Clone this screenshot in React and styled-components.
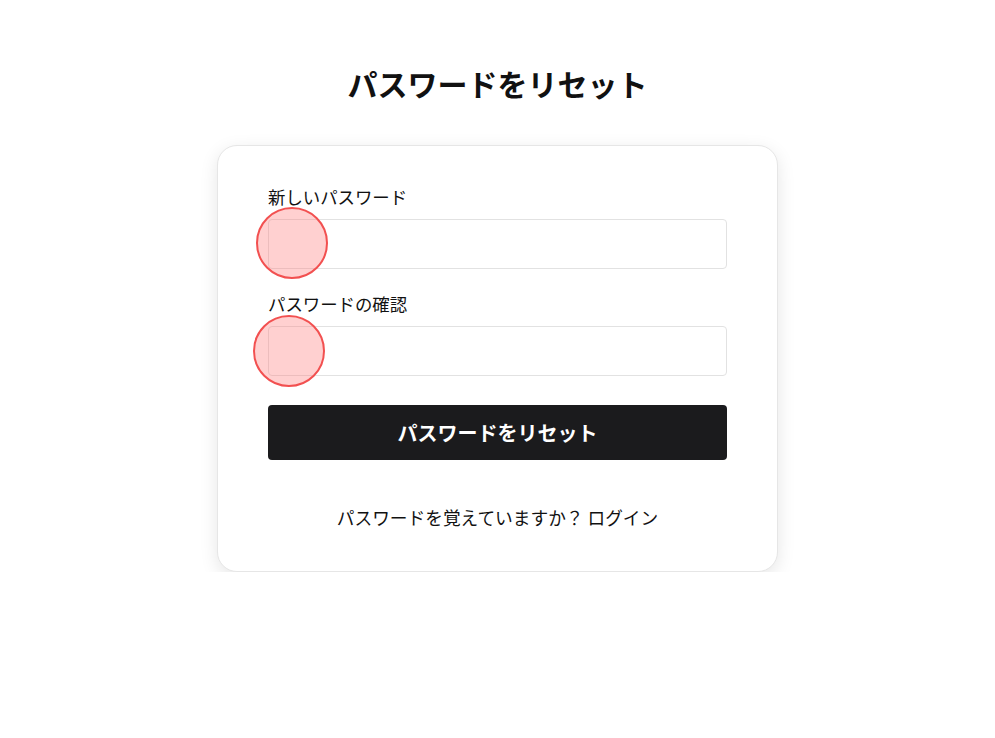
import styled, { createGlobalStyle } from 'styled-components';

const GlobalStyle = createGlobalStyle`
  html, body {
    margin: 0;
    padding: 0;
    background: #ffffff;
    font-family: 'Noto Sans CJK JP', 'Noto Sans', sans-serif;
    color: #111;
  }
`;

const Page = styled.div`
  display: flex;
  flex-direction: column;
  align-items: center;
  padding-top: 60px;
`;

const Title = styled.h1`
  margin: 0 0 39px;
  font-size: 30px;
  font-weight: 700;
  line-height: 46px;
  color: #111;
`;

const Card = styled.div`
  box-sizing: border-box;
  width: 561px;
  padding: 39px 50px 42px;
  background: #fff;
  border: 1px solid #e6e6e6;
  border-radius: 20px;
  box-shadow: 0 5px 18px rgba(0, 0, 0, 0.1);
`;

const Field = styled.div`
  position: relative;
  display: flex;
  flex-direction: column;
  margin-bottom: 23px;
`;

const Label = styled.label`
  font-size: 17.4px;
  line-height: 24px;
  margin-bottom: 10px;
  color: #111;
`;

const Input = styled.input`
  box-sizing: border-box;
  height: 50px;
  border: 1px solid #e2e2e2;
  border-radius: 4px;
  padding: 0 12px;
  font-size: 16px;
  outline: none;
`;

const TouchMark = styled.span`
  position: absolute;
  left: ${(p) => p.$x}px;
  top: ${(p) => p.$y}px;
  width: 68px;
  height: 68px;
  border-radius: 50%;
  background: rgba(255, 120, 120, 0.35);
  border: 2px solid #f25050;
  pointer-events: none;
`;

const Submit = styled.button`
  width: 100%;
  height: 55px;
  margin-top: 6px;
  border: none;
  border-radius: 4px;
  background: #1b1b1d;
  color: #fff;
  font-family: inherit;
  font-size: 20px;
  font-weight: 700;
  cursor: pointer;
`;

const Footer = styled.p`
  margin: 45px 0 0;
  text-align: center;
  font-size: 17.7px;
  line-height: 24px;
  color: #111;
`;

const LoginLink = styled.a`
  color: inherit;
  text-decoration: none;
`;

export default function App() {
  return (
    <>
      <GlobalStyle />
      <Page>
        <Title>パスワードをリセット</Title>
        <Card>
          <Field>
            <Label>新しいパスワード</Label>
            <Input type="password" />
            <TouchMark $x={-12} $y={22} />
          </Field>
          <Field>
            <Label>パスワードの確認</Label>
            <Input type="password" />
            <TouchMark $x={-15} $y={23} />
          </Field>
          <Submit>パスワードをリセット</Submit>
          <Footer>
            パスワードを覚えていますか？ <LoginLink href="#">ログイン</LoginLink>
          </Footer>
        </Card>
      </Page>
    </>
  );
}
